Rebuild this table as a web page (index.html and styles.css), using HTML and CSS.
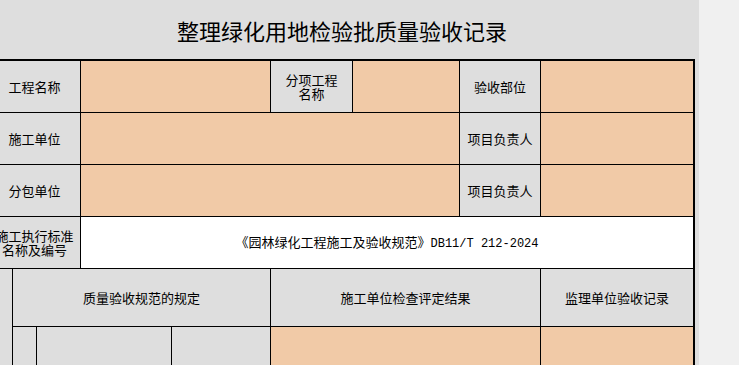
FILE: index.html
```html
<!DOCTYPE html>
<html lang="zh-CN">
<head>
<meta charset="utf-8">
<title>整理绿化用地检验批质量验收记录</title>
<link rel="stylesheet" href="styles.css">
</head>
<body>
<div class="sheet">
  <div class="title">整理绿化用地检验批质量验收记录</div>
  <div class="grid">
    <div class="cell label c-abc">工程名称</div>
    <div class="cell input c-de"></div>
    <div class="cell label c-f tight">分项工程<br>名称</div>
    <div class="cell input c-g"></div>
    <div class="cell label c-h">验收部位</div>
    <div class="cell input c-i"></div>

    <div class="cell label c-abc">施工单位</div>
    <div class="cell input c-dg"></div>
    <div class="cell label c-h">项目负责人</div>
    <div class="cell input c-i"></div>

    <div class="cell label c-abc">分包单位</div>
    <div class="cell input c-dg"></div>
    <div class="cell label c-h">项目负责人</div>
    <div class="cell input c-i"></div>

    <div class="cell label c-abc tight">施工执行标准<br>名称及编号</div>
    <div class="cell blank c-di"><span class="std">《园林绿化工程施工及验收规范》<span class="code">DB11/T 212-2024</span></span></div>

    <div class="cell label c-a side"></div>
    <div class="cell label c-be">质量验收规范的规定</div>
    <div class="cell label c-fh">施工单位检查评定结果</div>
    <div class="cell label c-i">监理单位验收记录</div>

    <div class="cell label c-b"></div>
    <div class="cell label c-cd"></div>
    <div class="cell label c-e"></div>
    <div class="cell input c-fh"></div>
    <div class="cell input c-i"></div>
  </div>
</div>
</body>
</html>
```

FILE: styles.css
```css
html, body {
  margin: 0;
  padding: 0;
  height: 100%;
  overflow: hidden;
  background: #f0f0f0;
}

body {
  font-family: "Noto Sans CJK SC", "Noto Sans", sans-serif;
  color: #000;
}

.sheet {
  width: 699px;
  height: 365px;
  background: #dedede;
  overflow: hidden;
}

.title {
  margin-left: -11px;
  width: 706px;
  height: 59px;
  display: flex;
  align-items: center;
  justify-content: center;
  font-size: 22px;
  line-height: 1;
}

.grid {
  margin-left: -11px;
  width: 704px;
  display: grid;
  grid-template-columns: 23px 23px 43px 90px 98px 81px 106px 80px 152px;
  grid-template-rows: 51px 51px 51px 51px 57px 60px;
  gap: 1px;
  background: #000;
  border-top: 2px solid #000;
  border-right: 2px solid #000;
}

.cell {
  display: flex;
  align-items: center;
  justify-content: center;
  text-align: center;
  font-size: 13px;
  line-height: 15px;
}

.label { background: #dedede; }
.input { background: #f1caa7; }
.blank { background: #ffffff; }

.tight { line-height: 13.5px; }

.std { display: block; }

.code {
  font-family: "Liberation Mono", monospace;
  font-size: 12px;
}

.c-abc { grid-column: 1 / 4; }
.c-de  { grid-column: 4 / 6; }
.c-f   { grid-column: 6 / 7; }
.c-g   { grid-column: 7 / 8; }
.c-h   { grid-column: 8 / 9; }
.c-i   { grid-column: 9 / 10; }
.c-dg  { grid-column: 4 / 8; }
.c-di  { grid-column: 4 / 10; }
.c-a   { grid-column: 1 / 2; }
.c-be  { grid-column: 2 / 6; }
.c-fh  { grid-column: 6 / 9; }
.c-b   { grid-column: 2 / 3; }
.c-cd  { grid-column: 3 / 5; }
.c-e   { grid-column: 5 / 6; }

.side { grid-row: 5 / 7; }
```
